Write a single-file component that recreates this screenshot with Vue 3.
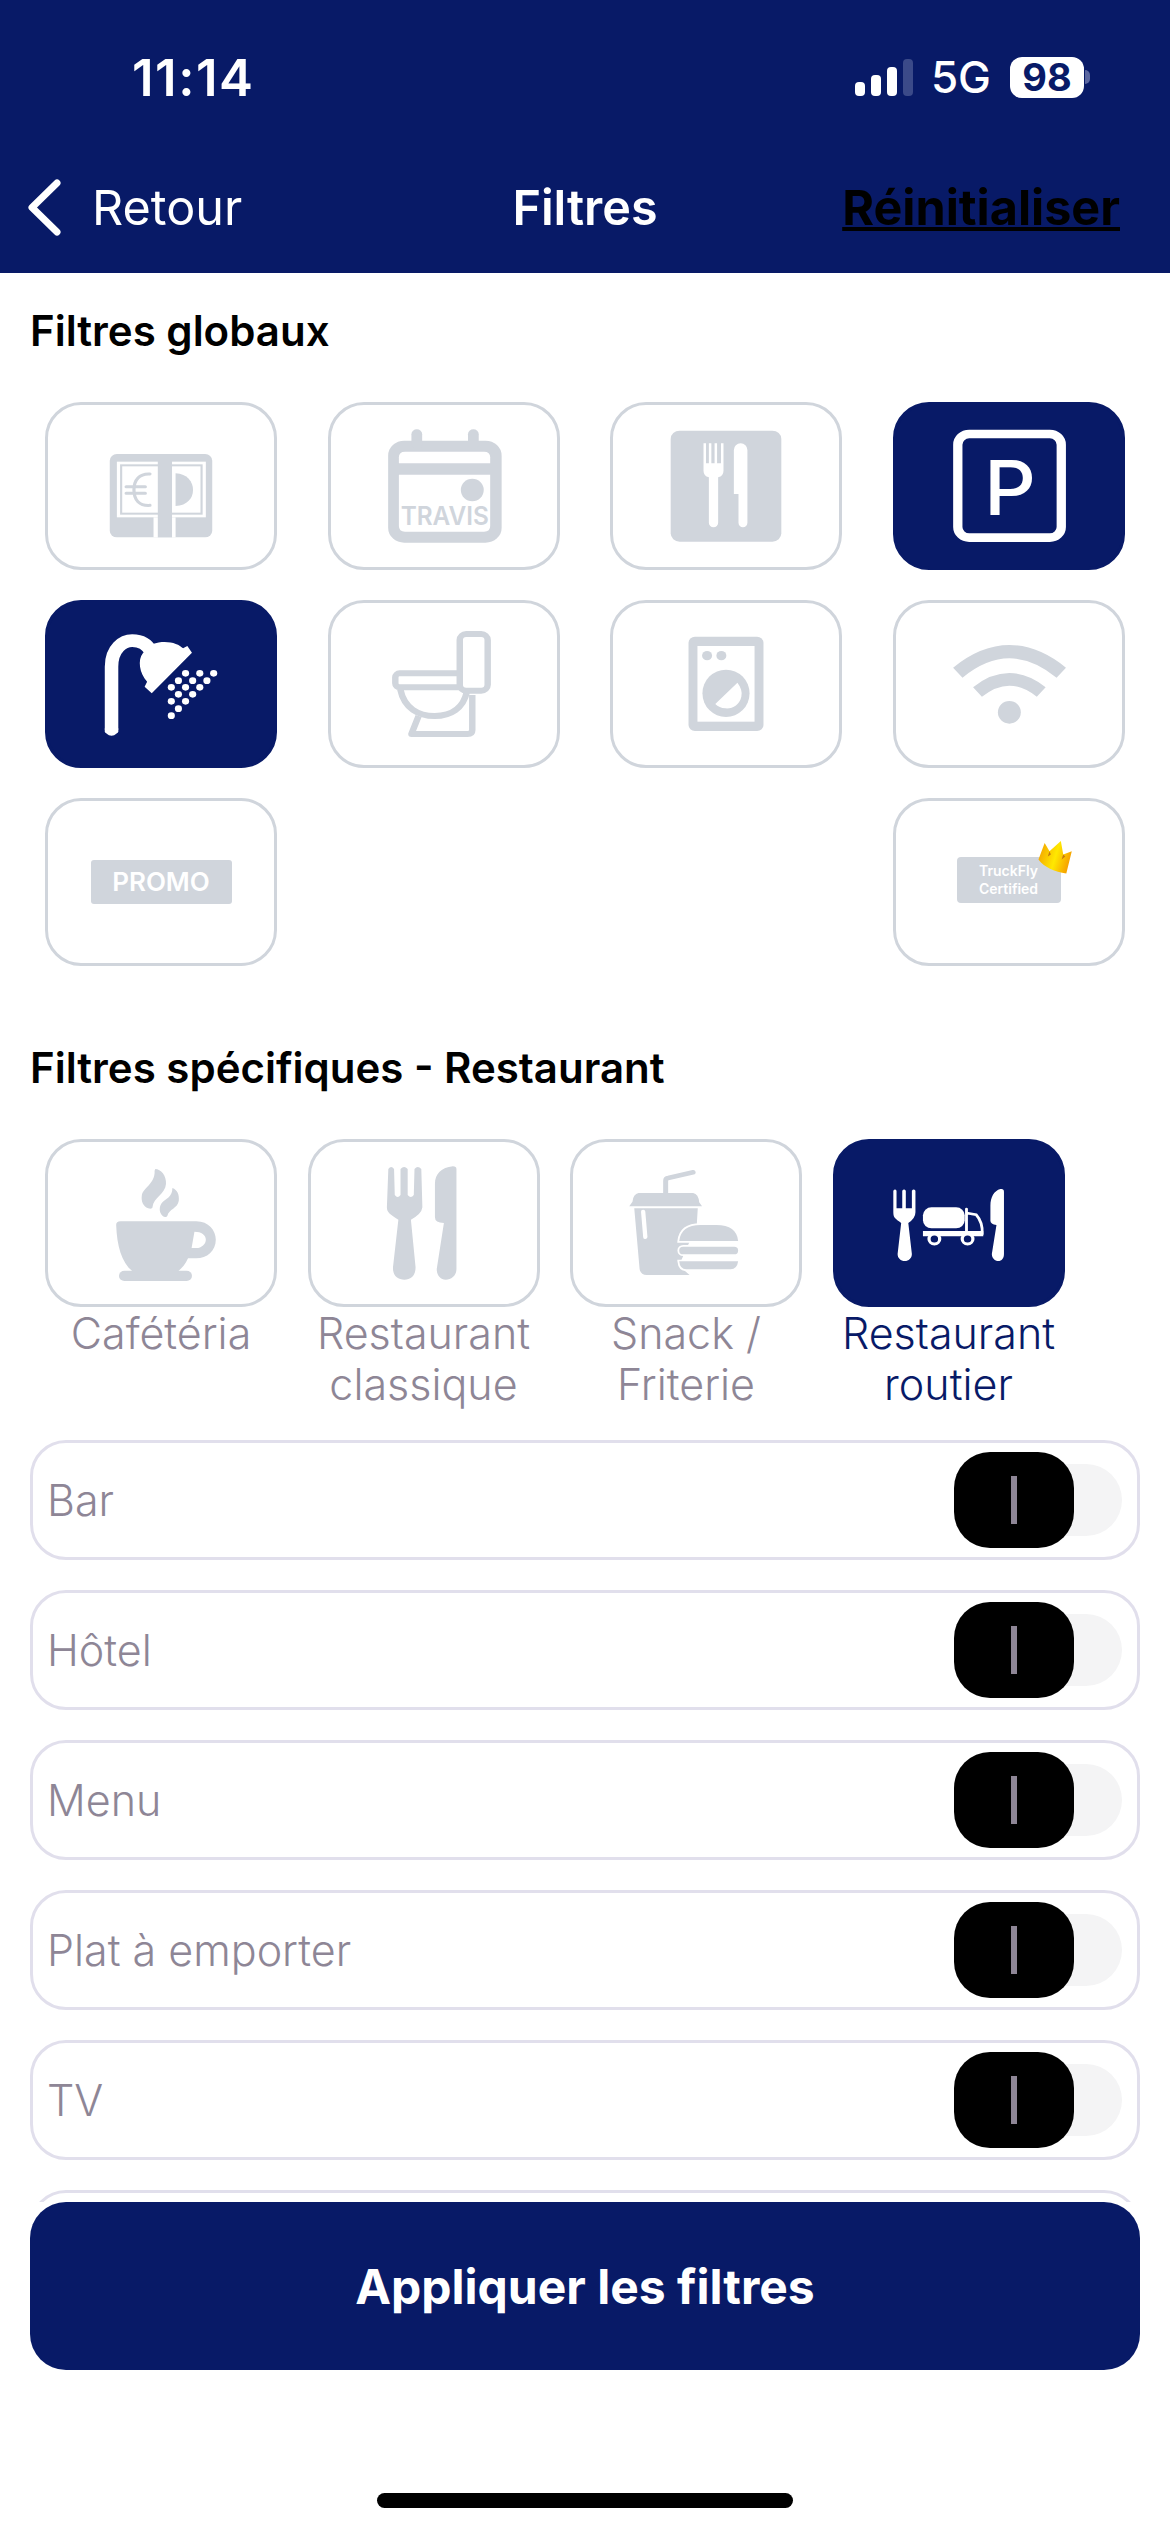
<script setup>
const options = ['Bar', 'Hôtel', 'Menu', 'Plat à emporter', 'TV', '']
const dots = [
  [544, 880], [505, 880], [465, 880], [525, 902], [485, 902], [445, 902], [505, 922], [465, 922],
  [425, 922], [485, 943], [445, 943], [465, 964], [425, 964], [445, 986], [425, 1007]
]
</script>

<template>
  <div class="page">
    <header class="header">
      <div class="status">
        <span class="time">11:14</span>
        <div class="status-right">
          <div class="signal">
            <i class="bar b1"></i><i class="bar b2"></i><i class="bar b3"></i><i class="bar b4"></i>
          </div>
          <span class="network">5G</span>
          <span class="battery">98</span>
          <i class="nub"></i>
        </div>
      </div>
      <nav class="nav">
        <div class="back">
          <svg class="chevron" viewBox="0 0 33 57"><path d="M29 4 4 28.5 29 53" fill="none" stroke="#fff" stroke-width="7" stroke-linecap="round" stroke-linejoin="round" /></svg>
          <span>Retour</span>
        </div>
        <span class="nav-title">Filtres</span>
        <a class="reset">Réinitialiser</a>
      </nav>
    </header>

    <main class="content">
      <h2 class="section-title">Filtres globaux</h2>
      <div class="global-grid">
        <div class="tile">
          <svg class="icon" viewBox="70 66 652 504" preserveAspectRatio="none">
            <rect x="252" y="222" width="288" height="250" rx="20" fill="#d0d5dc" />
            <rect x="272" y="245" width="250" height="167" fill="#fff" />
            <rect x="284" y="256" width="226" height="145" fill="#fff" stroke="#d0d5dc" stroke-width="6" />
            <rect x="375" y="412" width="62" height="60" fill="#fff" />
            <rect x="387" y="240" width="40" height="232" fill="#d0d5dc" />
            <path d="M365 282C335 280 320 300 320 330 320 360 335 378 365 376M298 320H352M298 340H352" fill="none" stroke="#d0d5dc" stroke-width="9" stroke-linecap="round" />
            <path d="M437 280C470 282 486 305 486 330 486 355 470 376 437 378Z" fill="#d0d5dc" />
          </svg>
        </div>
        <div class="tile">
          <svg class="icon" viewBox="862 66 648 504" preserveAspectRatio="none">
            <rect x="1030" y="182" width="317" height="306" rx="45" fill="#d0d5dc" />
            <rect x="1095" y="148" width="30" height="60" rx="15" fill="#d0d5dc" />
            <rect x="1253" y="148" width="30" height="60" rx="15" fill="#d0d5dc" />
            <path d="M1060 250V232Q1060 215 1077 215H1298Q1315 215 1315 232V250Z" fill="#fff" />
            <path d="M1060 284H1315V438Q1315 455 1298 455H1077Q1060 455 1060 438Z" fill="#fff" />
            <ellipse cx="1265" cy="330" rx="32" ry="34" fill="#d0d5dc" />
            <text x="1188" y="436" text-anchor="middle" textLength="246" lengthAdjust="spacingAndGlyphs" class="travis">TRAVIS</text>
          </svg>
        </div>
        <div class="tile">
          <svg class="icon" viewBox="85 66 650 504" preserveAspectRatio="none">
            <rect x="255" y="152" width="310" height="333" rx="25" fill="#d0d5dc" />
            <path d="M347 190H354V250H362V190H369V250H378V190H385V250H396V190H403V272Q403 288 388 292V428A13 14 0 0 1 362 428V292Q347 288 347 272Z" fill="#fff" />
            <path d="M432 210A19 20 0 0 1 470 210V428A12.500 14 0 0 1 445 428V342H432Z" fill="#fff" />
          </svg>
        </div>
        <div class="tile on">
          <svg class="icon" viewBox="877 66 648 504" preserveAspectRatio="none">
            <rect x="1058" y="162" width="289" height="311" rx="32" fill="none" stroke="#fff" stroke-width="26" />
            <text x="1204" y="405" text-anchor="middle" class="p-sign">P</text>
          </svg>
        </div>

        <div class="tile on">
          <svg class="icon" viewBox="70 660 652 504" preserveAspectRatio="none">
            <path d="M257 1048V860C257 805 290 782 315 782 345 782 360 798 368 815" fill="none" stroke="#fff" stroke-width="38" stroke-linecap="round" />
            <rect x="238" y="1040" width="38" height="20" rx="6" fill="#fff" />
            <path d="M372 792C410 778 445 790 458 805L470 798 483 818 370 940 350 920 357 905C335 880 330 840 345 820Z" fill="#fff" />
            <ellipse v-for="d in dots" :key="d.join()" :cx="d[0]" :cy="d[1]" rx="10" ry="10" fill="#fff" />
          </svg>
        </div>
        <div class="tile">
          <svg class="icon" viewBox="862 660 648 504" preserveAspectRatio="none">
            <path d="M1265 945V1050Q1265 1062 1252 1062H1095L1115 1008" fill="none" stroke="#d0d5dc" stroke-width="18" stroke-linejoin="round" />
            <path d="M1064 928C1075 985 1115 1008 1160 1008 1205 1008 1240 985 1250 935" fill="#fff" stroke="#d0d5dc" stroke-width="18" />
            <rect x="1050" y="880" width="190" height="42" rx="12" fill="#fff" stroke="#d0d5dc" stroke-width="18" />
            <rect x="1230" y="762" width="78" height="170" rx="18" fill="#fff" stroke="#d0d5dc" stroke-width="18" />
          </svg>
        </div>
        <div class="tile">
          <svg class="icon" viewBox="85 660 650 504" preserveAspectRatio="none">
            <rect x="305" y="770" width="210" height="283" rx="18" fill="#d0d5dc" />
            <rect x="330" y="798" width="160" height="227" fill="#fff" />
            <ellipse cx="357" cy="827" rx="14" ry="14" fill="#d0d5dc" />
            <ellipse cx="397" cy="827" rx="14" ry="14" fill="#d0d5dc" />
            <ellipse cx="410" cy="940" rx="66" ry="71" fill="#d0d5dc" />
            <path d="M442 908C452 922 456 935 453 950 448 975 428 987 408 985 397 984 387 980 380 972Z" fill="#fff" />
          </svg>
        </div>
        <div class="tile">
          <svg class="icon" viewBox="877 660 648 504" preserveAspectRatio="none">
            <path d="M1058 878Q1202 752 1347 878" fill="none" stroke="#d0d5dc" stroke-width="40" />
            <path d="M1113 936Q1202 860 1291 936" fill="none" stroke="#d0d5dc" stroke-width="38" />
            <ellipse cx="1202" cy="997" rx="32" ry="34" fill="#d0d5dc" />
          </svg>
        </div>

        <div class="tile">
          <span class="promo">PROMO</span>
        </div>
        <div class="tile last">
          <div class="certified">
            <span>TruckFly<br />Certified</span>
            <svg class="crown" viewBox="0 0 34 32">
              <defs>
                <linearGradient id="gold" x1="0" y1="0" x2="1" y2="0.3">
                  <stop offset="0" stop-color="#f29a00" />
                  <stop offset="0.6" stop-color="#ffe800" />
                  <stop offset="1" stop-color="#f7a600" />
                </linearGradient>
              </defs>
              <path d="M0 18 6 2 10.700 10 21.700 0 24 13 32.300 10 27 31.500C16 30 6 26 0 18Z" fill="url(#gold)" />
              <path d="M10.700 10 9 15 12 13ZM24 13 22.500 18 26 15Z" fill="#c47a10" />
            </svg>
          </div>
        </div>
      </div>

      <h2 class="section-title second">Filtres spécifiques - Restaurant</h2>
      <div class="specific-grid">
        <div class="spec">
          <div class="tile">
            <svg class="icon" viewBox="70 60 652 504" preserveAspectRatio="none">
              <path fill-rule="evenodd" d="M270 318Q270 307 282 307H495C530 307 550 335 550 362 550 395 525 418 495 418H472C465 435 455 448 445 456H315C285 430 272 380 270 318ZM490 338 482 387H495C510 387 522 375 522 362 522 348 510 338 490 338Z" fill="#d0d5dc" />
              <rect x="278" y="455" width="205" height="31" rx="15" fill="#d0d5dc" />
              <path d="M380 150C395 150 412 170 410 195 408 225 375 235 372 265 372 270 365 270 360 268 345 262 340 245 342 230 345 205 380 195 378 155Z" fill="#d0d5dc" />
              <path d="M428 207C442 212 448 228 446 245 443 268 418 270 414 290 412 295 405 295 400 290 390 280 390 262 400 250 410 238 428 235 428 207Z" fill="#d0d5dc" />
            </svg>
          </div>
          <span class="spec-label">Cafétéria</span>
        </div>
        <div class="spec">
          <div class="tile">
            <svg class="icon" viewBox="808 60 647 504" preserveAspectRatio="none">
              <path d="M1032 150Q1040 138 1048 150L1050 228Q1058 240 1066 228V150Q1076 138 1086 150V228Q1095 240 1103 228L1105 150Q1114 138 1124 150L1127 265Q1125 285 1095 302L1108 445C1108 470 1095 482 1077 482 1058 482 1044 470 1045 445L1060 302C1035 285 1028 280 1028 265Z" fill="#d0d5dc" />
              <path d="M1222 150Q1222 142 1212 142C1180 145 1162 165 1162 195V295Q1162 312 1187 312L1167 450C1167 470 1178 482 1192 482 1208 482 1222 470 1222 450Z" fill="#d0d5dc" />
            </svg>
          </div>
          <span class="spec-label">Restaurant classique</span>
        </div>
        <div class="spec">
          <div class="tile">
            <svg class="icon" viewBox="30 60 650 504" preserveAspectRatio="none">
              <path d="M298 225V185Q298 178 305 177L375 160" fill="none" stroke="#d0d5dc" stroke-width="14" stroke-linecap="round" />
              <path d="M222 222H375Q390 225 392 250L400 262H196L205 248Q207 225 222 222Z" fill="#d0d5dc" />
              <path d="M210 268H388L385 320 335 440 365 468H245Q228 468 225 450Z" fill="#d0d5dc" />
              <path d="M235 278 241 354" fill="none" stroke="#fff" stroke-width="12" stroke-linecap="round" />
              <g fill="#d0d5dc" stroke="#fff" stroke-width="10" paint-order="stroke">
                <path d="M336 366Q341 318 396 318H440Q497 318 501 366Z" />
                <rect x="336" y="383" width="165" height="23" rx="11" />
                <path d="M336 427H501Q498 451 480 451H356Q338 451 336 427Z" />
              </g>
            </svg>
          </div>
          <span class="spec-label">Snack / Friterie</span>
        </div>
        <div class="spec">
          <div class="tile on">
            <svg class="icon" viewBox="764 60 650 504" preserveAspectRatio="none">
              <path d="M933 215Q938 208 942 215V268H958V215Q963 208 968 215V268H985V215Q990 208 995 215V280Q995 298 975 312L985 405C985 418 976 426 965 426 954 426 945 418 945 405L955 312C940 300 933 298 933 280Z" fill="#fff" />
              <path d="M1243 218Q1243 208 1233 210C1215 215 1205 235 1205 260V305Q1205 315 1222 318L1209 405C1209 418 1218 426 1227 426 1237 426 1243 418 1243 405Z" fill="#fff" />
              <rect x="1016" y="265" width="117" height="63" rx="24" fill="#fff" />
              <path d="M1016 336H1185V352H1016Z" fill="#fff" />
              <path d="M1138 270V340M1138 282 1165 287Q1184 310 1182 345" fill="none" stroke="#fff" stroke-width="8" stroke-linecap="round" />
              <ellipse cx="1048" cy="360" rx="15" ry="15" fill="#081a67" stroke="#fff" stroke-width="9" />
              <ellipse cx="1141" cy="360" rx="15" ry="15" fill="#081a67" stroke="#fff" stroke-width="9" />
            </svg>
          </div>
          <span class="spec-label active">Restaurant routier</span>
        </div>
      </div>

      <div class="option-list">
        <div v-for="(opt, i) in options" :key="i" class="option">
          <span>{{ opt }}</span>
          <div class="switch">
            <div class="thumb"><i class="tick"></i></div>
          </div>
        </div>
      </div>
    </main>

    <footer class="footer">
      <button class="apply">Appliquer les filtres</button>
      <div class="home-bar"></div>
    </footer>
  </div>
</template>

<style>
html, body {
  margin: 0;
  background: #fff;
}
</style>

<style scoped>
.page {
  width: 1170px;
  height: 2532px;
  display: flex;
  flex-direction: column;
  overflow: hidden;
  background: #fff;
  font-family: Inter, "Liberation Sans", sans-serif;
}

.header {
  height: 273px;
  flex: none;
  background: #081a67;
  color: #fff;
  box-sizing: border-box;
}

.status {
  height: 154px;
  display: flex;
  justify-content: space-between;
  align-items: flex-start;
  padding: 48px 80px 0 132px;
  box-sizing: border-box;
}

.time {
  font-size: 51px;
  line-height: 60px;
  font-weight: 600;
  letter-spacing: 1.500px;
}

.status-right {
  display: flex;
  align-items: center;
  height: 60px;
  margin-top: -1px;
}

.signal {
  display: flex;
  align-items: flex-end;
  gap: 6px;
  height: 37px;
}

.bar {
  width: 10px;
  border-radius: 4px;
  background: #fff;
}

.b1 { height: 14px; }
.b2 { height: 21px; }
.b3 { height: 29px; }
.b4 { height: 37px; background: #3b4a89; }

.network {
  margin-left: 18px;
  font-size: 44px;
  line-height: 60px;
  font-weight: 500;
}

.battery {
  margin-left: 19px;
  width: 74px;
  height: 41px;
  border-radius: 12px;
  background: #fff;
  color: #081a67;
  font-size: 38px;
  line-height: 41px;
  font-weight: 700;
  text-align: center;
}

.nub {
  margin-left: 1px;
  width: 5px;
  height: 14px;
  border-radius: 0 7px 7px 0;
  background: #5b67a0;
}

.nav {
  display: grid;
  grid-template-columns: 1fr auto 1fr;
  align-items: center;
  height: 107px;
  padding: 0 50px;
  font-size: 48.500px;
  line-height: 60px;
}

.back {
  display: flex;
  align-items: center;
  gap: 31px;
  margin-left: -22px;
}

.chevron {
  width: 33px;
  height: 57px;
}

.nav-title {
  font-weight: 600;
}

.reset {
  justify-self: end;
  color: #000;
  font-weight: 700;
  text-decoration: underline;
  text-decoration-thickness: 4px;
  text-underline-offset: 2px;
}

.content {
  height: 1929px;
  flex: none;
  overflow: hidden;
  padding-top: 34px;
  box-sizing: border-box;
}

.section-title {
  margin: 0 0 47px 30px;
  font-size: 42px;
  line-height: 48px;
  font-weight: 600;
  color: #000;
}

.section-title.second {
  margin-top: 78px;
}

.global-grid {
  display: grid;
  grid-template-columns: repeat(4, 232px);
  grid-auto-rows: 168px;
  column-gap: 50.500px;
  row-gap: 30px;
  padding-left: 45px;
}

.tile {
  height: 168px;
  box-sizing: border-box;
  border: 3px solid #d0d5dc;
  border-radius: 36px;
  background: #fff;
  display: flex;
  align-items: center;
  justify-content: center;
  overflow: hidden;
}

.tile.on {
  border-color: #081a67;
  background: #081a67;
}

.tile.last {
  grid-column: 4;
  overflow: visible;
}

.icon {
  width: 232px;
  height: 168px;
  flex: none;
}

.travis {
  font-size: 76px;
  font-weight: 600;
  fill: #d0d5dc;
}

.p-sign {
  font-size: 226px;
  font-weight: 500;
  fill: #fff;
}

.promo {
  width: 141px;
  height: 44px;
  border-radius: 3px;
  background: #d0d5dc;
  color: #fff;
  font-size: 26px;
  line-height: 44px;
  font-weight: 600;
  text-align: center;
}

.certified {
  position: relative;
  width: 104px;
  height: 46px;
  margin-top: -4px;
  border-radius: 4px;
  background: #d0d5dc;
  color: #fff;
  font-size: 14px;
  line-height: 18px;
  font-weight: 600;
  text-align: center;
  display: flex;
  align-items: center;
  justify-content: center;
}

.crown {
  position: absolute;
  top: -16px;
  right: -13px;
  width: 36px;
  height: 33px;
}

.specific-grid {
  display: grid;
  grid-template-columns: repeat(4, 232px);
  column-gap: 30.500px;
  padding-left: 45px;
  margin-bottom: 28px;
}

.spec {
  display: flex;
  flex-direction: column;
}

.spec-label {
  min-height: 104px;
  margin-top: 1px;
  font-size: 43px;
  line-height: 51px;
  font-weight: 350;
  color: #8e8696;
  text-align: center;
}

.spec-label.active {
  color: #081a67;
}

.option-list {
  display: flex;
  flex-direction: column;
  gap: 30px;
  padding: 0 30px;
}

.option {
  height: 120px;
  flex: none;
  box-sizing: border-box;
  border: 3px solid #e1dfec;
  border-radius: 36px;
  padding: 0 15px 0 14px;
  display: flex;
  align-items: center;
  justify-content: space-between;
  font-size: 43px;
  font-weight: 350;
  color: #8e8696;
}

.switch {
  position: relative;
  width: 168px;
  height: 72px;
  border-radius: 36px;
  background: #f4f4f5;
}

.thumb {
  position: absolute;
  top: -12px;
  left: 0;
  width: 120px;
  height: 96px;
  border-radius: 36px;
  background: #000;
  display: flex;
  align-items: center;
  justify-content: center;
}

.tick {
  width: 6px;
  height: 48px;
  background: #8e8696;
}

.footer {
  flex: 1;
  padding: 0 30px;
}

.apply {
  display: block;
  width: 100%;
  height: 168px;
  border: none;
  border-radius: 36px;
  background: #081a67;
  color: #fff;
  font-family: inherit;
  font-size: 48px;
  font-weight: 700;
}

.home-bar {
  width: 416px;
  height: 15px;
  margin: 123px auto 0;
  border-radius: 8px;
  background: #000;
}
</style>
